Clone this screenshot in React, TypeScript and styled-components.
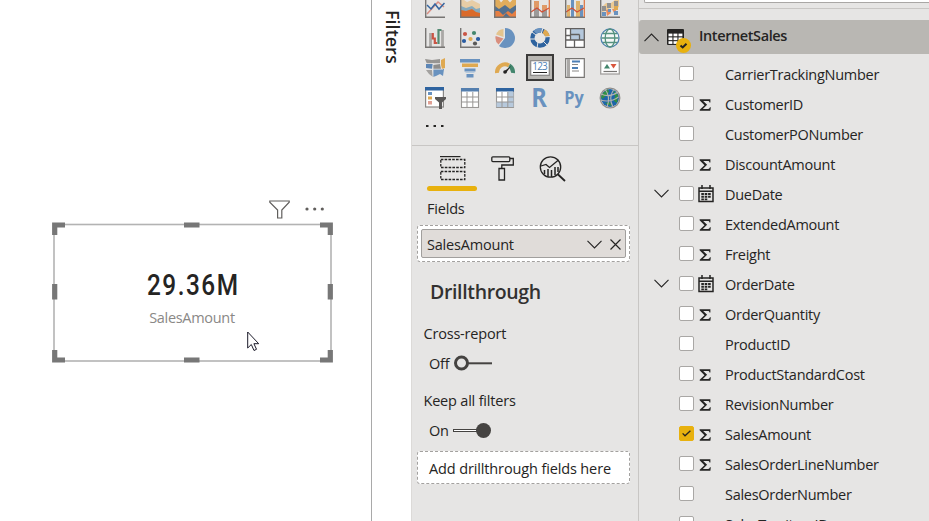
import React from "react";
import styled, { createGlobalStyle } from "styled-components";

const GlobalStyle = createGlobalStyle`
  * { box-sizing: border-box; }
  html, body { margin: 0; padding: 0; overflow: hidden; }
  body { font-family: "Open Sans", "Noto Sans", sans-serif; font-size: 14.5px; color: #252423; background: #fff; }
  svg { display: block; flex: none; }
`;

const Page = styled.div`
  display: grid;
  grid-template-columns: 371px 40px 228px 1fr;
  width: 929px;
  height: 521px;
  overflow: hidden;
`;

const Canvas = styled.main`
  background: #fff;
  padding: 199px 0 0 52px;
`;

const VisualHeader = styled.div`
  display: flex;
  align-items: center;
  justify-content: flex-end;
  gap: 15px;
  width: 281px;
  height: 20px;
  padding-right: 8px;
  margin-bottom: 3px;
`;

const CardVisual = styled.div`
  position: relative;
  width: 281px;
  height: 141px;
  padding-top: 45px;
  text-align: center;
`;

const SelectionFrame = styled.svg`
  position: absolute;
  inset: 0;
`;

const CardValue = styled.div`
  font: 500 29px/36px Roboto, sans-serif;
  letter-spacing: 1.8px;
  text-indent: 1.8px;
  transform: scaleX(0.84);
  color: #252423;
`;

const CardCaption = styled.div`
  font-size: 14.5px;
  line-height: 20px;
  letter-spacing: -0.3px;
  color: #8a8886;
  margin: 5px 1px 0 0;
`;

const Cursor = styled.svg`
  position: absolute;
  left: 195px;
  top: 109px;
`;

const FiltersPane = styled.aside`
  border-left: 1px solid #a9a9a9;
  background: #fff;
  padding: 10px 0 0 9px;
`;

const FiltersTitle = styled.div`
  writing-mode: vertical-rl;
  font-size: 18px;
  font-weight: 600;
  line-height: 24px;
  letter-spacing: 0;
`;

const VisualsPane = styled.section`
  display: flex;
  flex-direction: column;
  background: #e6e5e4;
  border-left: 1px solid #dcdad8;
  border-right: 1px solid #c8c6c4;
  overflow: hidden;
`;

const Gallery = styled.div`
  display: grid;
  grid-template-columns: repeat(6, 35px);
  grid-auto-rows: 30px;
  width: 210px;
  margin: -7px 0 0 5px;
  flex: none;
`;

const GalleryCell = styled.div<{ $selected?: boolean }>`
  display: flex;
  align-items: center;
  justify-content: center;
  ${(p) =>
    p.$selected &&
    `
    width: 28px;
    height: 27px;
    margin: 1px 0 0 4px;
    border: 2px solid #3b3a39;
    background: #b9b7b3;
  `}
`;

const LetterIcon = styled.span<{ $size: number; $scale: number; $lift: number }>`
  font-weight: 700;
  font-size: ${(p) => p.$size}px;
  line-height: 40px;
  color: #6992bf;
  transform: translateY(${(p) => p.$lift}px) scaleX(${(p) => p.$scale});
`;

const MoreRow = styled.div`
  height: 33px;
  padding: 11px 0 0 13px;
  border-bottom: 1px solid #c8c6c4;
  flex: none;
`;

const Tabs = styled.div`
  display: flex;
  padding: 9px 0 0 15px;
  height: 46px;
  flex: none;
`;

const Tab = styled.div<{ $active?: boolean }>`
  display: flex;
  flex-direction: column;
  align-items: center;
  justify-content: space-between;
  width: 50px;
  height: 36px;
  & > svg {
    margin: 1px 0 0 1px;
  }
  &::after {
    content: "";
    width: 50px;
    height: 5px;
    border-radius: 2.5px;
    background: ${(p) => (p.$active ? "#e8b10e" : "transparent")};
  }
`;

const Label = styled.div<{ $indent: number; $top: number; $track?: number }>`
  line-height: 20px;
  padding-left: ${(p) => p.$indent}px;
  margin-top: ${(p) => p.$top}px;
  letter-spacing: ${(p) => p.$track ?? -0.2}px;
  flex: none;
`;

const SectionTitle = styled.h2`
  margin: 16px 0 0 18px;
  font-size: 19.5px;
  line-height: 28px;
  font-weight: 600;
  letter-spacing: -0.35px;
  color: #323130;
`;

const Well = styled.div<{ $top: number; $height: number }>`
  display: flex;
  align-items: center;
  width: 213px;
  height: ${(p) => p.$height}px;
  margin: ${(p) => p.$top}px 0 0 5px;
  padding: 3px;
  background: #fff;
  border: 1px dashed #a3a19f;
  border-radius: 3px;
  flex: none;
`;

const Chip = styled.div`
  display: flex;
  align-items: center;
  gap: 8px;
  width: 100%;
  height: 29px;
  padding: 1px 4px 0 5px;
  background: #e0dcd9;
  border: 1px solid #a19f9d;
  border-radius: 2px;
`;

const ChipText = styled.span`
  flex: 1;
  letter-spacing: -0.2px;
`;

const Hint = styled.span`
  padding: 2px 0 0 8px;
  letter-spacing: -0.13px;
  white-space: nowrap;
`;

const ToggleRow = styled.div<{ $top: number }>`
  display: flex;
  align-items: center;
  height: 20px;
  margin: ${(p) => p.$top}px 0 0 17px;
  letter-spacing: -0.2px;
  flex: none;
`;

const ToggleText = styled.span`
  width: 24px;
`;

const FieldsPane = styled.section`
  display: flex;
  flex-direction: column;
  background: #e6e5e4;
  overflow: hidden;
`;

const SearchBox = styled.div`
  height: 3px;
  margin-left: 5px;
  background: #fff;
  border: 1px solid #a9a7a5;
  border-top: 0;
  border-right: 0;
  border-radius: 0 0 0 2px;
  flex: none;
`;

const Rule = styled.div`
  height: 1px;
  margin: 5px 0 11px;
  background: #c8c6c4;
  flex: none;
`;

const TableHeader = styled.div`
  display: flex;
  height: 34px;
  padding: 9px 0 0 5px;
  background: #b9b7b3;
  border-radius: 3px 0 0 3px;
  margin-bottom: 5px;
  flex: none;
`;

const TableName = styled.div`
  margin: -3px 0 0 8px;
  font-weight: 600;
  line-height: 20px;
  letter-spacing: -0.4px;
`;

const HeaderChevron = styled.div`
  width: 23px;
  padding-top: 4px;
`;

const FieldRow = styled.div`
  display: grid;
  grid-template-columns: 40px 16px 30px 1fr;
  align-items: center;
  height: 30px;
  flex: none;
`;

const ExpandSlot = styled.div`
  padding: 0 0 1px 15px;
`;

const Checkbox = styled.span<{ $checked?: boolean }>`
  display: flex;
  align-items: center;
  justify-content: center;
  width: 15px;
  height: 15px;
  margin-bottom: 2px;
  border-radius: 2px;
  border: 1px solid ${(p) => (p.$checked ? "#e8b10e" : "#a9a7a5")};
  background: ${(p) => (p.$checked ? "#e8b10e" : "#fff")};
`;

const TypeSlot = styled.div<{ $date?: boolean }>`
  padding: ${(p) => (p.$date ? "0 0 0 3px" : "1px 0 0 3px")};
`;

const FieldName = styled.span`
  padding-top: 2px;
  line-height: 20px;
  letter-spacing: -0.28px;
  white-space: nowrap;
`;

const INK = "#252423";
const GREY = "#777573";

const Chevron = ({ up }: { up?: boolean }) => (
  <svg width="15" height="9" viewBox="0 0 15 9" fill="none" stroke={INK} strokeWidth="1.1">
    <path d={up ? "M.5 8.2 7.5 1l7 7.2" : "M.5.8l7 7.2 7-7.2"} />
  </svg>
);

const Sigma = () => (
  <svg width="14" height="12" viewBox="0 0 14 12" fill={INK}>
    <path d="M1.600.2h10.800v3.300h-.9c-.2-1.300-.7-1.600-1.700-1.600H5.200l3.900 3.900-4.300 4.100h5.300c1 0 1.500-.4 1.800-1.700h.9l-.4 3.600H1.700v-1l4.800-4.600L1.600 1.300z" />
  </svg>
);

const CalendarIcon = () => (
  <svg width="16" height="18" viewBox="0 0 16 18" fill="none" stroke={INK}>
    <path d="M1 3h14v13.500H1zM1 6.300h14" strokeWidth="1.500" />
    <path d="M4 0v4M12 0v4" strokeWidth="1.500" />
    <path
      d="M3.300 9h2.600M6.700 9h2.600M10.100 9h2.600M3.300 11.800h2.600M6.700 11.800h2.600M10.100 11.800h2.600M3.300 14.400h2.600M6.700 14.400h2.600"
      strokeWidth="1.900"
    />
  </svg>
);

const TableIcon = () => (
  <svg width="24" height="24" viewBox="0 0 24 24">
    <rect width="17" height="16" rx="1" fill={INK} />
    <g fill="#fff">
      {[4.6, 8.4, 12.2].map((y) =>
        [1.5, 6.5, 11.5].map((x) => <rect key={`${x}-${y}`} x={x} y={y} width="3.9" height="2.700" />)
      )}
    </g>
    <circle cx="16.500" cy="16.500" r="7.500" fill="#e8b10e" />
    <path d="M13.500 16.500l2.200 2 3.800-3.700" fill="none" stroke={INK} strokeWidth="2" />
  </svg>
);

const Icon = ({ children }: { children: React.ReactNode }) => (
  <svg width="20" height="20" viewBox="0 0 20 20" fill="none">
    {children}
  </svg>
);

const Axis = () => <path d="M.7 0v19.300H20" stroke={GREY} strokeWidth="1.400" />;

const galleryIcons: React.ReactNode[] = [
  <Icon key="line">
    <path d="M2 16L13 4l6 5" stroke="#d98e83" strokeWidth="1.500" />
    <path d="M2 7l4 4 4-5 4 5 5.500-6" stroke="#3465a0" strokeWidth="1.500" />
    <Axis />
  </Icon>,
  <Icon key="area">
    <path d="M1 0l6 4 5-2 8 4v13H1z" fill="#e7cda6" />
    <path d="M1 8l5 2 6-2 4 3 4-1v9H1z" fill="#86aabd" />
    <path d="M1 12l5 1 6-2 4 3 4 1v4H1z" fill="#da6a2a" />
    <Axis />
  </Icon>,
  <svg key="stack" width="22" height="20" viewBox="0 0 22 20" fill="none">
    <path d="M1 0h21v19H1z" fill="#e0ac5c" />
    <path d="M4 0l3 4.500L11 0zM12 0l4 4.500L20 0z" fill="#e6e5e4" />
    <path d="M1 8l4 3 6-4 5 4 6-4v11H1z" fill="#52708f" />
    <path d="M1 13l4 0 4 4 5-4 4 3 4-4v7H1z" fill="#e67f43" />
    <path d="M9 19l3-4 4 4z" fill="#52708f" />
    <path d="M.7 0v19.300H22" stroke={GREY} strokeWidth="1.400" />
  </svg>,
  <Icon key="combo1">
    <path d="M4 3h5v7H4zM12 7h5v5h-5z" fill="#df9a67" />
    <path d="M4 10h5v9H4zM12 12h5v7h-5z" fill="#9b9a99" />
    <path d="M1 14l6-4 5 4 7-4" stroke="#d24f35" strokeWidth="1.200" />
    <Axis />
    <path d="M19.300 0v19" stroke="#df713b" strokeWidth="1.200" />
  </Icon>,
  <Icon key="combo2">
    <path d="M2 7h3v12H2zM11 3h4v16h-4z" fill="#dfb36b" />
    <path d="M6 2h3v17H6zM15 7h3v12h-3z" fill="#6992bf" />
    <path d="M1 14l6-4 5 4 7-4" stroke="#d24f35" strokeWidth="1.200" />
    <Axis />
    <path d="M19.300 0v19" stroke="#df713b" strokeWidth="1.200" />
  </Icon>,
  <Icon key="ribbon">
    <path d="M2 9l4-4h5l4-3h4v7l-4 2-5-1-4 3-4 1z" fill="#ecca94" />
    <path d="M6 12l3-1 2 4-4 3zM12 11l3 0 3 5-3 1z" fill="#e98d5f" />
    <path d="M2 8h4v5H2zM7 5h4v5H7zM14 3h4v5h-4z" fill="#929190" />
    <path d="M2 14h4v4H2zM8 11h3v3H8zM14 13h4v4h-4z" fill="#6992bf" />
    <path d="M14 8h4v4h-4z" fill="#dfa951" />
    <Axis />
  </Icon>,
  <Icon key="waterfall">
    <path d="M5.500 5v14M17.500 2v17" stroke="#aaa8a6" strokeWidth="2.800" />
    <path d="M7.800 5v5.500h2V15h2.500" stroke="#ca5545" strokeWidth="2.200" />
    <path d="M13.500 16V2h3" stroke="#548b74" strokeWidth="2.200" />
    <Axis />
  </Icon>,
  <Icon key="scatter">
    <circle cx="5" cy="6" r="2.100" fill="#ca5545" />
    <circle cx="14" cy="5" r="2.100" fill="#43866d" />
    <circle cx="4" cy="13" r="2.100" fill="#2a5ca2" />
    <circle cx="10.500" cy="11" r="2.100" fill="#dfa951" />
    <circle cx="18" cy="11" r="2.100" fill="#2a5ca2" />
    <circle cx="15" cy="15.500" r="2.100" fill="#5a5958" />
    <Axis />
  </Icon>,
  <Icon key="pie">
    <path d="M10 0a10 10 0 1 1-6 18l6-8z" fill="#6992bf" />
    <path d="M8.500 1v8L1 6.500A9 9 0 0 1 8.500 1z" fill="#e4c48d" />
    <path d="M.6 8l7.900 2.500-5 6A9 9 0 0 1 .6 8z" fill="#d98e7d" />
  </Icon>,
  <Icon key="donut">
    <circle cx="10" cy="10" r="7.600" stroke="#2e639f" strokeWidth="4.300" />
    <path d="M5 4.300A7.600 7.600 0 0 1 12 2.600" stroke="#6992bf" strokeWidth="4.500" />
    <path d="M13.500 3.200A7.600 7.600 0 0 1 17.500 8.500" stroke="#dfa951" strokeWidth="4.500" />
    <path d="M13 0l-2 6M20 8.500l-6 .5M17 17l-4-4M7 20l1-6M0 11h6M2 4l4 3" stroke="#e6e5e4" />
  </Icon>,
  <Icon key="treemap">
    <path d="M1 1h18v18H1z" fill="#fff" />
    <path d="M5.500 1H19v11H5.500z" fill="#b5c8dc" />
    <path
      d="M.7.700h18.600v18.600H.7zM.7 12h18.600M5.500 1v11M14.500 6.500V12M9.500 12v7M1 7.500h4.500M5.500 6.500h9"
      stroke="#62605f"
      strokeWidth="1.300"
    />
  </Icon>,
  <Icon key="globe">
    <circle cx="10" cy="10" r="9" fill="#f4f7f7" stroke="#4e82ae" strokeWidth="1.300" />
    <ellipse cx="10" cy="10" rx="4.800" ry="9" stroke="#55927f" strokeWidth="1.300" />
    <path d="M1.500 10h17M3 5.500h14M3 14.500h14" stroke="#55927f" strokeWidth="1.300" />
  </Icon>,
  <Icon key="map">
    <path d="M0 1l7 1 8-1v5H2z" fill="#979593" />
    <path d="M16 2l4-2v10l-3 1-1-4z" fill="#dfa951" />
    <path d="M1 6h7l-1 5-6-1z" fill="#5d86b6" />
    <path d="M8 7l7-1 1 5H8z" fill="#8e8d8c" />
    <path d="M1 12l6 0 1 7-4-3z" fill="#a3a19f" />
    <path d="M8 11h11l-1 7-3-2-4 2-3 1z" fill="#6992bf" />
    <path d="M8 5v14M1 5.500h14M1 11.200h17" stroke="#e6e5e4" strokeWidth=".8" />
  </Icon>,
  <Icon key="funnel">
    <path d="M0 1h20v3.500H0z" fill="#6992bf" />
    <path d="M2 5.500h16V9H2z" fill="#dfa951" />
    <path d="M4.500 10.500h11v3h-11zM6.500 16h7v3.500h-7z" fill="#6992bf" />
    <path d="M5.500 13.800h9V15h-9z" fill="#b8cbdd" />
  </Icon>,
  <Icon key="gauge">
    <path d="M2 15a8 8 0 0 1 12-7.500" stroke="#dfa951" strokeWidth="4" />
    <path d="M14.200 7.500A8 8 0 0 1 18 15" stroke="#43866d" strokeWidth="4" />
    <path d="M9 13.500L16 8l-5 7z" fill={INK} />
    <circle cx="10" cy="14" r="1.800" fill={INK} />
  </Icon>,
  <svg key="card" width="20" height="16" viewBox="0 0 20 16">
    <rect x=".7" y=".7" width="18.600" height="14.600" fill="#fff" stroke="#8a8886" strokeWidth="1.200" />
    <text x="10" y="10" fontFamily="Open Sans, sans-serif" fontSize="10" fill="#4d7fb5" textAnchor="middle" textLength="15.500">
      123
    </text>
    <path d="M3 12.500h14" stroke={INK} />
  </svg>,
  <Icon key="multirow">
    <path d="M.7.700h18.600v18.600H.7z" fill="#fff" stroke="#777573" strokeWidth="1.200" />
    <path d="M3.500 1v18" stroke="#aaa8a6" strokeWidth="3" />
    <path d="M7 3.500h8M7 10h6" stroke="#4d7fb5" strokeWidth="2" />
    <path d="M7 6.500h6M7 13h7" stroke="#8a8886" strokeWidth="1.200" />
  </Icon>,
  <Icon key="kpi">
    <rect x=".7" y="3" width="18.600" height="13" fill="#fff" stroke="#a19f9d" strokeWidth="1.300" />
    <path d="M4 10.500L7 6l3 4.500z" fill="#43866d" />
    <path d="M10.500 6h6l-3 4.500z" fill="#d9563d" />
    <path d="M3.500 13.500h13.500" stroke="#777573" strokeWidth="1.200" />
  </Icon>,
  <svg key="slicer" width="22" height="22" viewBox="-1 0 22 22">
    <rect x=".6" y="1" width="17.800" height="19" fill="#fff" stroke="#8a8886" strokeWidth="1.200" />
    <path d="M0 0h19v3.500H0z" fill="#2e639f" />
    <path d="M3 5h4v3H3z" fill="#6992bf" />
    <path d="M3 9.500h4v3H3z" fill="#dfa951" />
    <path d="M3 14h4v3.500H3z" fill="#e0a094" />
    <path d="M10 10h11v2l-4 3.500V22h-3v-6.500L10 12z" fill="#595756" />
  </svg>,
  <Icon key="table">
    <rect x="1.500" y="0" width="17" height="19.500" fill="#fff" stroke="#999795" strokeWidth="1.100" />
    <path d="M1.500 9h17M1.500 14h17M7 4v15.500M12.800 4v15.500M1.500 19.500h17" stroke="#999795" />
    <path d="M1 0h18v3.500H1z" fill="#557fae" />
  </Icon>,
  <Icon key="matrix">
    <rect x="1.500" y="0" width="17" height="19.500" fill="#fff" stroke="#999795" strokeWidth="1.100" />
    <path d="M12.800 4h5.700v15.500h-17V14h11.300z" fill="#b7c9dc" />
    <path d="M1.500 9h17M1.500 14h17M7 4v15.500M12.800 4v15.500M1.500 19.500h17" stroke="#999795" />
    <path d="M1 0h18v3.500H1z" fill="#2e639f" />
  </Icon>,
  <LetterIcon key="r" $size={27.5} $scale={0.86} $lift={-1}>R</LetterIcon>,
  <LetterIcon key="py" $size={18.5} $scale={0.88} $lift={-1}>Py</LetterIcon>,
  <svg key="arcgis" width="22" height="24" viewBox="0 0 22 24">
    <circle cx="11" cy="12" r="9" fill="#1d65aa" />
    <path d="M4 7l5-4 1 3-3 4-4 3-1-3zM14 4l5 5-1 8-3-2 1-5zM6 17l5-1 2 4-4-1z" fill="#329044" />
    <circle cx="11" cy="12" r="9.800" fill="none" stroke="#8f8d8b" strokeWidth="1.300" />
    <path d="M2 8q9 4 17-2M1.500 14q10 3 18-3M6 3q6 8 2 18M15 3q-6 9-1 18" fill="none" stroke="#b5b3b1" strokeWidth="1.1" />
  </svg>,
];

const FieldsTabIcon = () => (
  <svg width="26" height="25" viewBox="0 0 26 25" fill="none" stroke={INK}>
    <path d="M0 .6h20.500" strokeWidth="1.200" />
    <path d="M.8 3.500h24v8h-24zM.8 15.500h24v8h-24z" strokeWidth="1.300" strokeDasharray="2.600 1.200" />
  </svg>
);

const RollerIcon = () => (
  <svg width="24" height="26" viewBox="0 0 24 26" fill="none" stroke={INK} strokeWidth="1.300">
    <rect x=".8" y=".8" width="18" height="4.800" rx="1" />
    <path d="M18.800 2.500h3.500V9H10.800v3.500M8 12.500h5.500V24H8z" />
  </svg>
);

const AnalyticsIcon = () => (
  <svg width="27" height="26" viewBox="-.5 0 27 26" fill="none" stroke={INK} strokeWidth="1.300">
    <circle cx="11" cy="11" r="10.200" />
    <path d="M18 18l7.500 7" strokeWidth="1.800" />
    <path d="M1.500 10l5-1.500 3.500 3 9-7.500" />
    <path d="M5 14v4M8.500 13v7.500M12 14v7M15.500 11v8M18.500 11v5" strokeWidth="1.500" />
  </svg>
);

type Field = { name: string; kind?: "sum" | "date"; checked?: boolean };

const fields: Field[] = [
  { name: "CarrierTrackingNumber" },
  { name: "CustomerID", kind: "sum" },
  { name: "CustomerPONumber" },
  { name: "DiscountAmount", kind: "sum" },
  { name: "DueDate", kind: "date" },
  { name: "ExtendedAmount", kind: "sum" },
  { name: "Freight", kind: "sum" },
  { name: "OrderDate", kind: "date" },
  { name: "OrderQuantity", kind: "sum" },
  { name: "ProductID" },
  { name: "ProductStandardCost", kind: "sum" },
  { name: "RevisionNumber", kind: "sum" },
  { name: "SalesAmount", kind: "sum", checked: true },
  { name: "SalesOrderLineNumber", kind: "sum" },
  { name: "SalesOrderNumber" },
  { name: "SalesTerritoryID" },
];

export default function App() {
  return (
    <>
      <GlobalStyle />
      <Page>
        <Canvas>
          <VisualHeader>
            <svg width="21" height="19" viewBox="0 0 21 19" fill="none" stroke="#605e5c" strokeWidth="1.200">
              <path d="M.8 1h19.400v1.200L12.800 10v8H8.600v-8L.8 2.200z" />
            </svg>
            <svg width="20" height="4" viewBox="0 0 20 4" fill="#605e5c">
              <circle cx="2" cy="2" r="1.600" />
              <circle cx="9.700" cy="2" r="1.600" />
              <circle cx="17.300" cy="2" r="1.600" />
            </svg>
          </VisualHeader>
          <CardVisual>
            <SelectionFrame width="281" height="141" viewBox="0 0 281 141" fill="none">
              <rect x="2" y="2.500" width="277" height="136.500" stroke="#b3b3b3" strokeWidth="1.600" />
              <path
                d="M2.700 13V3H13M268 3h10.300v10M278.300 128v10H268M13 138H2.700v-10M132 3h15.500M132 138h15.500M2.700 62v15.500M278.300 62v15.500"
                stroke="#777"
                strokeWidth="5.200"
              />
            </SelectionFrame>
            <CardValue>29.36M</CardValue>
            <CardCaption>SalesAmount</CardCaption>
            <Cursor width="13" height="21" viewBox="0 0 13 21">
              <path d="M.7 1v16l3.600-3.500 2.700 6 2.500-1.200-2.600-5.600h4.800z" fill="#fff" stroke="#1b1a29" />
            </Cursor>
          </CardVisual>
        </Canvas>

        <FiltersPane>
          <FiltersTitle>Filters</FiltersTitle>
        </FiltersPane>

        <VisualsPane>
          <Gallery>
            {galleryIcons.map((icon, i) => (
              <GalleryCell key={i} $selected={i === 15}>
                {icon}
              </GalleryCell>
            ))}
          </Gallery>
          <MoreRow>
            <svg width="20" height="4" viewBox="0 0 20 4" fill={INK}>
              <path d="M1 1h2.500v2H1zM8.500 1H11v2H8.500zM16 1h2.500v2H16z" />
            </svg>
          </MoreRow>
          <Tabs>
            <Tab $active>
              <FieldsTabIcon />
            </Tab>
            <Tab>
              <RollerIcon />
            </Tab>
            <Tab>
              <AnalyticsIcon />
            </Tab>
          </Tabs>
          <Label $indent={15} $top={7}>Fields</Label>
          <Well $top={6} $height={37}>
            <Chip>
              <ChipText>SalesAmount</ChipText>
              <Chevron />
              <svg width="11" height="11" viewBox="0 0 11 11" stroke={INK} strokeWidth="1.200">
                <path d="M.5.5l10 10M10.500.5l-10 10" />
              </svg>
            </Chip>
          </Well>
          <SectionTitle>Drillthrough</SectionTitle>
          <Label $indent={11.5} $top={18}>Cross-report</Label>
          <ToggleRow $top={9}>
            <ToggleText>Off</ToggleText>
            <svg width="40" height="16" viewBox="0 0 40 16" fill="none" stroke="#454341">
              <circle cx="8.500" cy="8" r="6" strokeWidth="3" />
              <path d="M15 8.300h24" strokeWidth="2" />
            </svg>
          </ToggleRow>
          <Label $indent={11.5} $top={18} $track={-0.2}>Keep all filters</Label>
          <ToggleRow $top={9}>
            <ToggleText>On</ToggleText>
            <svg width="40" height="16" viewBox="0 0 40 16">
              <rect x=".5" y="7.500" width="26" height="2" fill="#fff" stroke="#454341" />
              <circle cx="30.500" cy="8.500" r="7.500" fill="#454341" />
            </svg>
          </ToggleRow>
          <Well $top={11} $height={33}>
            <Hint>Add drillthrough fields here</Hint>
          </Well>
        </VisualsPane>

        <FieldsPane>
          <SearchBox />
          <Rule />
          <TableHeader>
            <HeaderChevron>
              <Chevron up />
            </HeaderChevron>
            <TableIcon />
            <TableName>InternetSales</TableName>
          </TableHeader>
          {fields.map((f) => (
            <FieldRow key={f.name}>
              <ExpandSlot>{f.kind === "date" && <Chevron />}</ExpandSlot>
              <Checkbox $checked={f.checked}>
                {f.checked && (
                  <svg width="9" height="7" viewBox="0 0 9 7" fill="none" stroke={INK} strokeWidth="1.300">
                    <path d="M.6 3.400l2.400 2.400L8.400.7" />
                  </svg>
                )}
              </Checkbox>
              <TypeSlot $date={f.kind === "date"}>
                {f.kind === "sum" && <Sigma />}
                {f.kind === "date" && <CalendarIcon />}
              </TypeSlot>
              <FieldName>{f.name}</FieldName>
            </FieldRow>
          ))}
        </FieldsPane>
      </Page>
    </>
  );
}
